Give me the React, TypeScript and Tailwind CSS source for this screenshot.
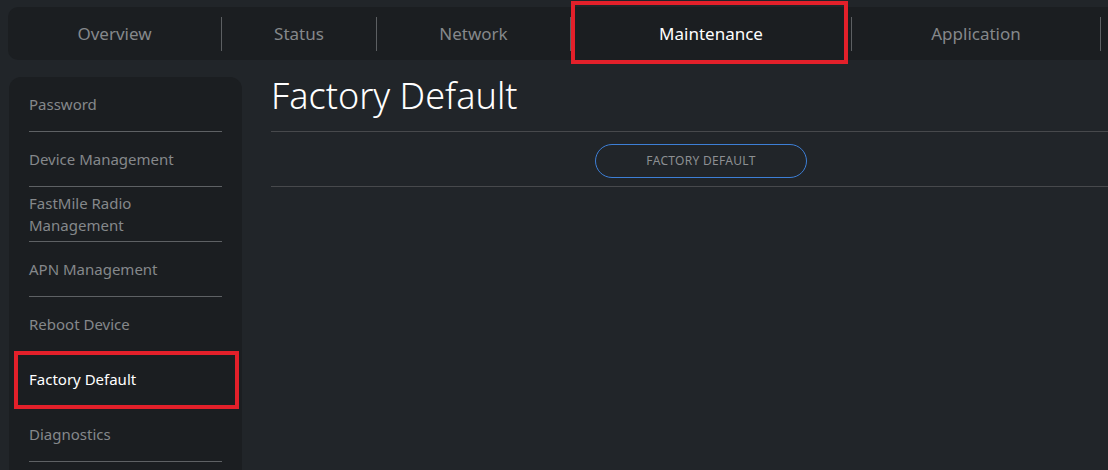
const tabs = [
  { label: "Overview", w: "w-[213px]" },
  { label: "Status", w: "w-[154px]" },
  { label: "Network", w: "w-[193px]" },
  { label: "Maintenance", w: "w-[280px]", active: true },
  { label: "Application", w: "w-[248px]" },
];

const menu = [
  "Password",
  "Device Management",
  "FastMile Radio Management",
  "APN Management",
  "Reboot Device",
  "Factory Default",
  "Diagnostics",
];

export default function App() {
  return (
    <div
      className="w-[1108px] h-[470px] overflow-hidden bg-[#212529]"
      style={{ fontFamily: '"Noto Sans", "Open Sans", sans-serif' }}
    >
      <div className="relative w-[1160px] pt-[7px] pl-[8px]">
        {/* Top navigation */}
        <nav className="flex h-[53px] items-center rounded-l-[10px] bg-[#1b1e21]">
          {tabs.map((t, i) => (
            <div key={t.label} className="flex h-full items-center">
              {i > 0 && <div className="h-[34px] w-px bg-[#5c5f62]" />}
              <div
                className={`${t.w} flex h-full items-center justify-center text-[17px] ${
                  t.active ? "text-white" : "text-[#85888b]"
                }`}
              >
                {t.label}
              </div>
            </div>
          ))}
          <div className="h-[34px] w-px bg-[#5c5f62]" />
        </nav>

        {/* annotation over the active tab */}
        <div className="absolute left-[571px] top-[1px] h-[63px] w-[277px] border-4 border-[#e3202a]" />

        <div className="mt-[17px] flex gap-[29px] pl-px">
          {/* Side menu */}
          <aside className="relative w-[233px] rounded-t-[12px] bg-[#1b1e21] px-[20px] pb-4">
            {menu.map((m) => (
              <div
                key={m}
                className={`flex h-[55px] items-center border-b border-[#5e6164] text-[15px] leading-[22px] ${
                  m === "Factory Default" ? "text-white" : "text-[#85888b]"
                }`}
              >
                <span className={m.startsWith("FastMile") ? "w-[120px]" : ""}>{m}</span>
              </div>
            ))}
            <div className="absolute left-[5px] top-[274px] h-[58px] w-[225px] border-4 border-[#e3202a]" />
          </aside>

          {/* Main content */}
          <main className="w-[860px]">
            <h1 className="h-[54px] text-[36px] font-light leading-[38px] text-white">Factory Default</h1>
            <div className="flex h-[56px] items-start justify-center border-y border-[#47494c] pt-[12px]">
              <button className="h-[34px] w-[212px] rounded-full border border-[#3d7fd6] text-[12px] tracking-wide text-[#8d9093]">
                FACTORY DEFAULT
              </button>
            </div>
          </main>
        </div>
      </div>
    </div>
  );
}
